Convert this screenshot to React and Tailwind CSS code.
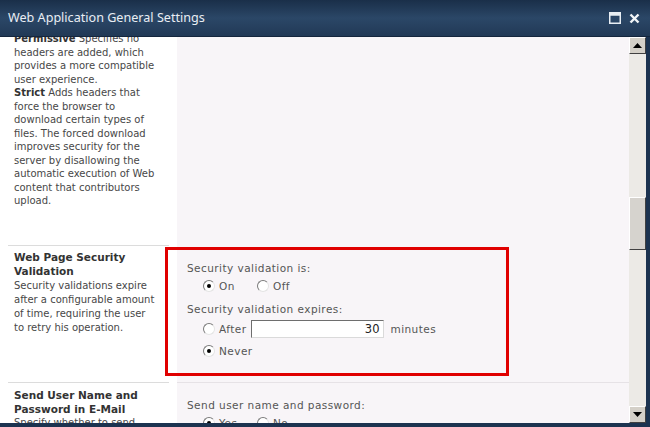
import React from 'react'

const body = { fontFamily: '"DejaVu Sans", Verdana, sans-serif' }

function Radio({ checked }) {
  return (
    <span className="inline-block w-[12px] h-[12px] rounded-full bg-white border border-[#7a7a7a] border-b-[#e4e4e4] border-r-[#e4e4e4] relative mr-[4px] shrink-0">
      {checked && <span className="absolute left-[3px] top-[3px] w-[4px] h-[4px] rounded-full bg-black" />}
    </span>
  )
}

function Arrow({ up }) {
  return (
    <div className="w-[17px] h-[17px] bg-[#d4d0c8] border border-t-white border-l-white border-b-[#404040] border-r-[#404040] flex items-center justify-center">
      <svg width="9" height="5" viewBox="0 0 9 5">
        {up ? <path d="M0 5 L4.5 0 L9 5 Z" fill="#000" /> : <path d="M0 0 L4.5 5 L9 0 Z" fill="#000" />}
      </svg>
    </div>
  )
}

const Lines = ({ lines }) => lines.map((l, i) => <div key={i} className="whitespace-nowrap">{l}</div>)

export default function App() {
  return (
    <div className="w-[650px] h-[427px] bg-[#1c3350] flex flex-col overflow-hidden relative" style={body}>
      {/* ── Title bar ── */}
      <div className="h-[37px] shrink-0 bg-gradient-to-b from-[#1a2f49] via-[#2b4767] to-[#213956] flex items-center justify-between pl-[8px] pr-[10px] border-b border-[#14263d]">
        <span className="text-[12.6px] text-[#e9eef4]" style={{ fontFamily: '"Noto Sans", "Open Sans", sans-serif' }}>
          Web Application General Settings
        </span>
        <div className="flex items-center gap-[8px]">
          <svg width="12" height="12" viewBox="0 0 12 12">
            <rect x="0.75" y="0.75" width="10.5" height="10.5" fill="none" stroke="#e8eef4" strokeWidth="1.5" />
            <rect x="0.75" y="0.75" width="10.5" height="3" fill="#e8eef4" />
          </svg>
          <svg width="11" height="11" viewBox="0 0 11 11">
            <path d="M1.5 1.5 L9.5 9.5 M9.5 1.5 L1.5 9.5" stroke="#f2f5f8" strokeWidth="2.4" />
          </svg>
        </div>
      </div>

      {/* ── Body ── */}
      <div className="flex flex-1 min-h-0 pr-[4px]">
        <div className="w-[629px] bg-white overflow-hidden">
          <div className="-mt-[5px] text-[#474747]">
            {/* Row: content types (scrolled) */}
            <div className="flex h-[213px]">
              <div className="w-[177px] px-[14px] text-[10px] leading-[13.5px]">
                <div className="whitespace-nowrap"><b className="text-[#333]">Permissive</b> Specifies no</div>
                <Lines lines={['headers are added, which', 'provides a more compatible', 'user experience.']} />
                <div className="whitespace-nowrap"><b className="text-[#333]">Strict</b> Adds headers that</div>
                <Lines lines={['force the browser to', 'download certain types of', 'files. The forced download', 'improves security for the', 'server by disallowing the', 'automatic execution of Web', 'content that contributors', 'upload.']} />
              </div>
              <div className="flex-1 bg-[#f8f5f8]" />
            </div>

            {/* Row: web page security validation */}
            <div className="flex">
              <div className="w-[177px] px-[8px]">
                <div className="border-t border-[#dcdcdc] pl-[6px] pt-[4px] h-[137px]">
                  <h3 className="font-bold text-[#333] text-[10.5px] leading-[14px]">
                    <Lines lines={['Web Page Security', 'Validation']} />
                  </h3>
                  <div className="text-[10px] leading-[14px] mt-[1px]">
                    <Lines lines={['Security validations expire', 'after a configurable amount', 'of time, requiring the user', 'to retry his operation.']} />
                  </div>
                </div>
              </div>
              <div className="flex-1 bg-[#f8f5f8] pl-[10px] pt-[16px] text-[#555] text-[10.5px] leading-[14px] tracking-[0.45px]">
                <p>Security validation is:</p>
                <div className="flex items-center pl-[16px] mt-[3px] h-[16px]">
                  <Radio checked />
                  <span className="w-[38px]">On</span>
                  <Radio />
                  <span>Off</span>
                </div>
                <p className="mt-[8px]">Security validation expires:</p>
                <div className="flex items-center pl-[16px] mt-[3px] h-[19px]">
                  <Radio />
                  <span className="mr-[5px]">After</span>
                  <div className="w-[133px] h-[18px] bg-white border border-[#6e6e6e] border-b-[#dadada] border-r-[#dadada] text-right pr-[4px] leading-[16px] text-[#222] text-[11.5px] tracking-normal">
                    30
                  </div>
                  <span className="ml-[6px]">minutes</span>
                </div>
                <div className="flex items-center pl-[16px] mt-[5px] h-[16px]">
                  <Radio checked />
                  <span>Never</span>
                </div>
              </div>
            </div>

            {/* Row: send user name and password */}
            <div className="flex">
              <div className="w-[177px] px-[8px]">
                <div className="border-t border-[#dcdcdc] pl-[6px] pt-[6px]">
                  <h3 className="font-bold text-[#333] text-[10.5px] leading-[13.5px]">
                    <Lines lines={['Send User Name and', 'Password in E-Mail']} />
                  </h3>
                  <div className="text-[10px] leading-[13.5px]">Specify whether to send</div>
                </div>
              </div>
              <div className="flex-1 bg-[#f8f5f8] border-t border-[#e6e2e6] pl-[10px] pt-[15px] text-[#555] text-[10.5px] leading-[14px] tracking-[0.45px]">
                <p>Send user name and password:</p>
                <div className="flex items-center pl-[16px] mt-[3px] h-[16px]">
                  <Radio checked />
                  <span className="w-[38px]">Yes</span>
                  <Radio />
                  <span>No</span>
                </div>
              </div>
            </div>
          </div>
        </div>

        {/* ── Scrollbar ── */}
        <div className="w-[17px] bg-[#eceae6] flex flex-col justify-between">
          <Arrow up />
          <div className="flex-1 pt-[143px]">
            <div className="h-[53px] bg-[#d6d3ce] border border-t-white border-l-white border-b-[#404040] border-r-[#404040]" />
          </div>
          <Arrow />
        </div>
      </div>
      <div className="h-[4px] shrink-0 bg-[#1c3350]" />

      {/* ── Red highlight annotation ── */}
      <div className="absolute left-[165px] top-[247px] w-[344px] h-[129px] border-[3px] border-[#e00000] pointer-events-none" />
    </div>
  )
}
